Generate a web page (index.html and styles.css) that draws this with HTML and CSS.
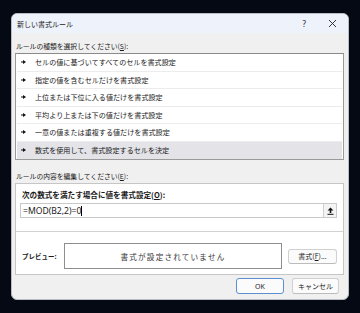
FILE: index.html
```html
<!DOCTYPE html>
<html lang="ja">
<head>
<meta charset="utf-8">
<link rel="stylesheet" href="styles.css">
</head>
<body>
<div class="dialog">
  <div class="titlebar">
    <span class="title">新しい書式ルール</span>
    <span class="help">?</span>
    <svg class="close" width="9" height="9" viewBox="0 0 9 9"><path d="M1 1L8 8M8 1L1 8" stroke="#222" stroke-width="0.9" fill="none"/></svg>
  </div>
  <div class="content">
    <div class="label">ルールの種類を選択してください(<u>S</u>):</div>
    <div class="list">
      <div class="row"><svg class="arr" width="5" height="4" viewBox="0 0 5 4"><path d="M0 1.5H2V0L5 2L2 4V2.5H0Z" fill="#111"/></svg><span>セルの値に基づいてすべてのセルを書式設定</span></div>
      <div class="row"><svg class="arr" width="5" height="4" viewBox="0 0 5 4"><path d="M0 1.5H2V0L5 2L2 4V2.5H0Z" fill="#111"/></svg><span>指定の値を含むセルだけを書式設定</span></div>
      <div class="row"><svg class="arr" width="5" height="4" viewBox="0 0 5 4"><path d="M0 1.5H2V0L5 2L2 4V2.5H0Z" fill="#111"/></svg><span>上位または下位に入る値だけを書式設定</span></div>
      <div class="row"><svg class="arr" width="5" height="4" viewBox="0 0 5 4"><path d="M0 1.5H2V0L5 2L2 4V2.5H0Z" fill="#111"/></svg><span>平均より上または下の値だけを書式設定</span></div>
      <div class="row"><svg class="arr" width="5" height="4" viewBox="0 0 5 4"><path d="M0 1.5H2V0L5 2L2 4V2.5H0Z" fill="#111"/></svg><span>一意の値または重複する値だけを書式設定</span></div>
      <div class="row sel"><svg class="arr" width="5" height="4" viewBox="0 0 5 4"><path d="M0 1.5H2V0L5 2L2 4V2.5H0Z" fill="#111"/></svg><span>数式を使用して、書式設定するセルを決定</span></div>
    </div>
    <div class="label label2">ルールの内容を編集してください(<u>E</u>):</div>
    <div class="box">
      <div class="boxtop">
        <div class="blabel">次の数式を満たす場合に値を書式設定(<u>O</u>):</div>
        <div class="input">
          <span class="formula">=MOD(B2,2)=0<span class="caret"></span></span>
          <span class="refbtn"><svg width="7" height="8" viewBox="0 0 7 8"><path d="M3.5 0.5L6.5 3.5H4.3V6H2.7V3.5H0.5Z" fill="#111"/><rect x="0.5" y="6.8" width="6" height="1" fill="#111"/></svg></span>
        </div>
      </div>
      <div class="preview">
        <span class="plabel">プレビュー:</span>
        <div class="pbox">書式が設定されていません</div>
        <span class="btn fmt">書式(<u>F</u>)...</span>
      </div>
    </div>
    <div class="footer">
      <span class="btn ok">OK</span>
      <span class="btn cancel">キャンセル</span>
    </div>
  </div>
</div>
</body>
</html>
```

FILE: styles.css
```css
* { box-sizing: border-box; }
html, body {
  margin: 0;
  padding: 0;
}
body {
  width: 360px;
  height: 313px;
  background: #040914;
  font-family: "Noto Sans CJK JP", "Noto Sans", sans-serif;
  font-size: 7px;
  color: #1a1a1a;
  padding: 13px 0 0 11px;
  overflow: hidden;
}
u { text-decoration: underline; text-underline-offset: 1px; }
.dialog {
  width: 338px;
  height: 287px;
  background: #f0f0f0;
  border: 1px solid #b9bcc2;
  border-radius: 6px;
  overflow: hidden;
}
.titlebar {
  height: 19px;
  background: #eef2fa;
  display: flex;
  align-items: center;
  padding-left: 5px;
}
.title {
  flex: 1;
  font-size: 7px;
  line-height: 10px;
}
.help {
  font-family: "Noto Sans", sans-serif;
  font-size: 8px;
  margin-right: 22px;
}
.close { margin-right: 11px; }
.content {
  padding: 8px 4px 0 3px;
}
.label {
  line-height: 10px;
  height: 10px;
  margin-left: 1px;
  margin-bottom: 2px;
  font-size: 6.8px;
}
.label2 { margin-top: 11px; }
.list {
  height: 107px;
  background: #fff;
  border: 1px solid #9a9a9a;
  border-top-color: #8a8a8a;
  padding: 0 1px;
}
.row {
  height: 17.5px;
  display: flex;
  align-items: center;
  padding-left: 4px;
  border-bottom: 1px solid #ececec;
  color: #1a1a1a;
  font-size: 7.1px;
}
.row:last-child { border-bottom: none; }
.row.sel { background: #e3e3e8; }
.arr { margin-right: 9px; flex: none; }
.box {
  height: 92px;
  background: #fff;
  border: 1px solid #c6c6c6;
}
.boxtop {
  height: 48px;
  border-bottom: 1px solid #d2d2d2;
  padding: 6px 6px 0 4px;
}
.blabel {
  font-weight: bold;
  font-size: 7.6px;
  line-height: 10px;
  padding-left: 2px;
}
.input {
  margin-top: 3px;
  height: 15px;
  border: 1px solid #c9c9c9;
  display: flex;
  align-items: center;
  justify-content: space-between;
  padding-left: 2px;
}
.formula {
  font-family: "Noto Sans", sans-serif;
  font-size: 8.6px;
  display: flex;
  align-items: center;
}
.caret {
  display: inline-block;
  width: 1px;
  height: 10px;
  background: #000;
}
.refbtn {
  width: 13px;
  height: 13px;
  background: #f4f4f4;
  border-left: 1px solid #d0d0d0;
  display: flex;
  align-items: center;
  justify-content: center;
}
.preview {
  display: flex;
  align-items: center;
  padding: 11px 0 0 6px;
}
.plabel {
  font-weight: bold;
  font-size: 6.5px;
  width: 42px;
}
.pbox {
  width: 218px;
  height: 26px;
  border: 1px solid #8e8e8e;
  display: flex;
  align-items: center;
  justify-content: center;
  font-size: 7.6px;
  letter-spacing: 1.2px;
  color: #333;
}
.btn {
  display: flex;
  align-items: center;
  justify-content: center;
  height: 16px;
  background: #fbfbfb;
  border: 1px solid #d0d0d0;
  border-bottom-color: #bcbcbc;
  border-radius: 3px;
  font-size: 7px;
}
.fmt {
  width: 49px;
  height: 15px;
  margin-left: 6px;
}
.footer {
  display: flex;
  justify-content: flex-end;
  gap: 8px;
  margin-top: 3px;
  padding-right: 5px;
}
.ok {
  width: 48px;
  border: 1px solid #5b8fcf;
  font-family: "Noto Sans", sans-serif;
}
.cancel { width: 47px; }
```
